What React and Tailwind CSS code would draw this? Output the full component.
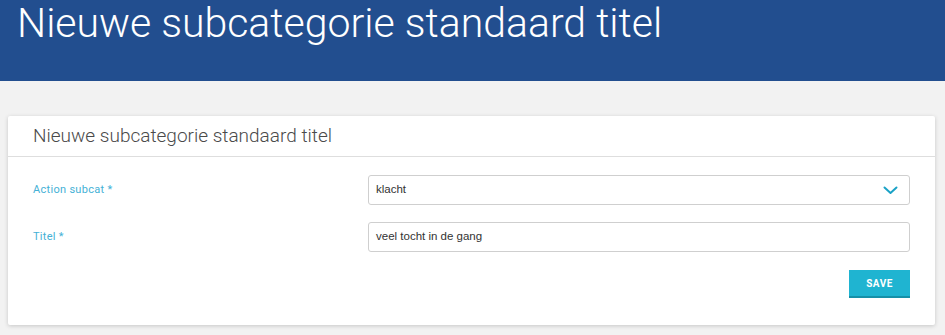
export default function App() {
  return (
    <div className="min-h-screen bg-[#f2f2f2]" style={{ fontFamily: "Roboto, 'Liberation Sans', sans-serif" }}>
      <header className="h-[81px] bg-[#224e8f] px-[17px]">
        <h1 className="text-[41px] font-light leading-[47px] text-white" style={{ fontFamily: "Roboto, sans-serif" }}>
          Nieuwe subcategorie standaard titel
        </h1>
      </header>
      <div className="ml-[8px] mr-[10px] mt-[35px] rounded-[2px] bg-white shadow-[0_1px_4px_rgba(0,0,0,0.18)]">
        <div className="flex h-[41px] items-center border-b border-[#dedede] px-[25px]">
          <h2 className="text-[19px] font-light text-[#4a4a4a]" style={{ fontFamily: "Roboto, sans-serif" }}>
            Nieuwe subcategorie standaard titel
          </h2>
        </div>
        <div className="px-[25px] pt-[18px] pb-[27px]">
          <div className="flex flex-col gap-[17px]">
            <div className="flex items-center">
              <label className="w-[335px] shrink-0 text-[11px] tracking-[0.3px] text-[#45b1d6]">Action subcat *</label>
              <div className="flex h-[30px] flex-1 items-center justify-between rounded-[3px] border border-[#cfcfcf] pl-[7px] pr-[11px]">
                <span className="text-[11.5px] text-[#333]" style={{ fontFamily: "'Liberation Sans', Arial, sans-serif" }}>klacht</span>
                <svg width="15" height="9" viewBox="0 0 15 9" fill="none">
                  <path d="M1.5 1.5 L7.5 7 L13.5 1.5" stroke="#1aa2c6" strokeWidth="2" strokeLinecap="round" strokeLinejoin="round" />
                </svg>
              </div>
            </div>
            <div className="flex items-center">
              <label className="w-[335px] shrink-0 text-[11px] tracking-[0.3px] text-[#45b1d6]">Titel *</label>
              <div className="flex h-[30px] flex-1 items-center rounded-[3px] border border-[#cfcfcf] pl-[7px]">
                <span className="text-[11.5px] text-[#333]" style={{ fontFamily: "'Liberation Sans', Arial, sans-serif" }}>veel tocht in de gang</span>
              </div>
            </div>
          </div>
          <div className="mt-[18px] flex justify-end">
            <button className="h-[28px] w-[61px] border-b-2 border-[#1590a8] bg-[#1fb4d1] text-[10px] font-bold tracking-[0.5px] text-white">
              SAVE
            </button>
          </div>
        </div>
      </div>
    </div>
  );
}
